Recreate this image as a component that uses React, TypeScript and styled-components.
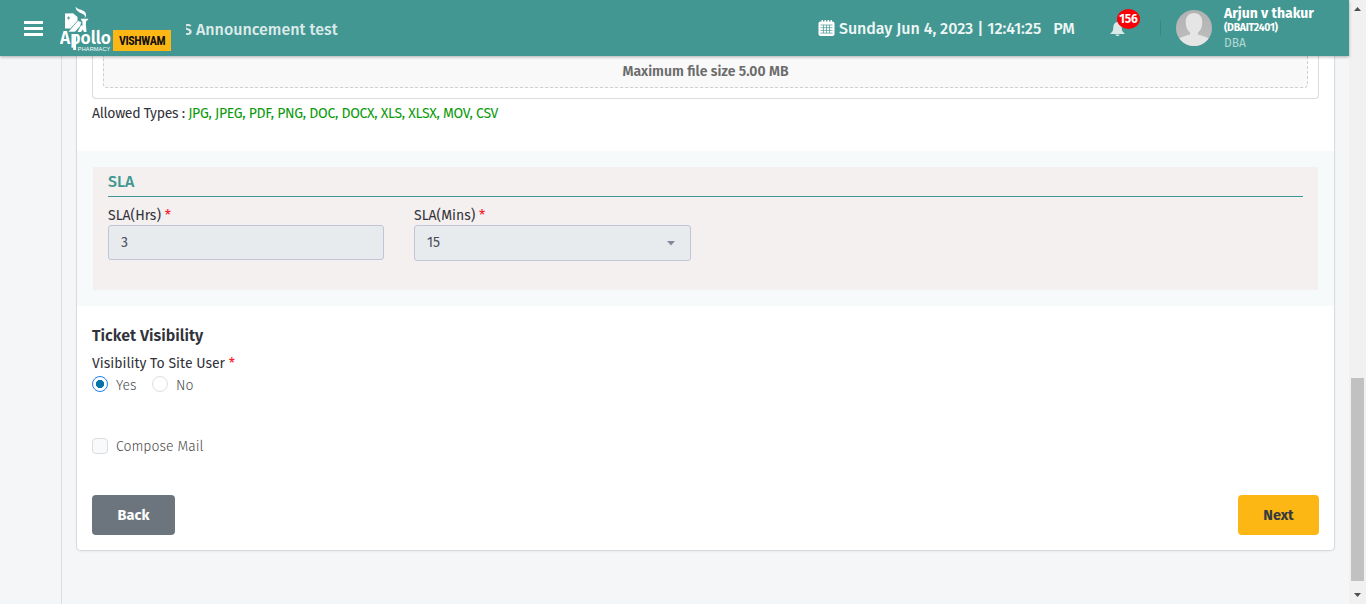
import React from "react";
import styled, { createGlobalStyle } from "styled-components";

const GlobalStyle = createGlobalStyle`
  * { box-sizing: border-box; }
  body {
    margin: 0;
    overflow: hidden;
    background: #f5f6f8;
    font-family: "Fira Sans", "Noto Sans", "Open Sans", sans-serif;
    font-size: 14px;
    color: #32323a;
  }
  button { font: inherit; }
`;

const Page = styled.div`
  display: flex;
  width: 100%;
  height: 604px;
`;

const Viewport = styled.div`
  flex: 1;
  min-width: 0;
  display: flex;
  flex-direction: column;
`;

const Text = styled.span<{ $ls?: number }>`
  letter-spacing: ${(p) => p.$ls ?? 0}px;
  white-space: pre;
`;

/* ---------- Header ---------- */

const Header = styled.header`
  position: relative;
  z-index: 2;
  flex: none;
  height: 56px;
  display: flex;
  align-items: center;
  padding-left: 24px;
  background: #429792;
  color: #fff;
  box-shadow: 0 1px 3px rgba(0, 0, 0, 0.3);
`;

const MenuButton = styled.button`
  width: 19px;
  height: 15px;
  margin: 1px 17px 0 0;
  padding: 0;
  border: 0;
  background: none;
  display: flex;
  flex-direction: column;
  justify-content: space-between;
`;

const MenuBar = styled.span`
  width: 19px;
  height: 3px;
  background: #fff;
`;

const Brand = styled.div`
  display: flex;
  align-items: flex-end;
  height: 56px;
  width: 126px;
`;

const Tag = styled.div`
  width: 58px;
  height: 21px;
  margin: 0 0 5px 0;
  display: flex;
  align-items: center;
  justify-content: center;
  background: #fdb714;
  color: #111;
  font: 700 12px/22px Roboto, sans-serif;
  font-stretch: 75%;
`;

const Announcement = styled.div`
  width: 632px;
  height: 24px;
  display: flex;
  align-items: center;
  overflow: hidden;
  font-size: 16px;
  font-weight: 500;
  color: #dcebea;
`;

const Marquee = styled.div`
  margin-left: -3px;
  padding-top: 2px;
`;

const Clock = styled.div`
  width: 292px;
  display: flex;
  align-items: center;
  font-size: 16px;
  font-weight: 500;
  color: #eef6f5;
  svg { margin-right: 4px; }
`;

const Meridiem = styled.span`
  margin-left: 12px;
`;

const Bell = styled.div`
  position: relative;
  width: 50px;
  height: 56px;
  border: 0;
  svg { position: absolute; left: 0; top: 22px; }
`;

const Badge = styled.span`
  position: absolute;
  left: 7px;
  top: 9px;
  width: 23px;
  height: 20px;
  border-radius: 50%;
  background: #fb0007;
  font-size: 12px;
  font-weight: 700;
  line-height: 20px;
  text-align: center;
`;

const Divider = styled.span`
  width: 1px;
  height: 16px;
  margin-right: 15px;
  background: #3a8782;
`;

const UserInfo = styled.div`
  margin-left: 12px;
  height: 56px;
  padding-top: 5px;
  display: flex;
  flex-direction: column;
`;

const UserLine = styled.span<{ $size: number; $weight: number; $line: number; $color?: string }>`
  font-size: ${(p) => p.$size}px;
  font-weight: ${(p) => p.$weight};
  line-height: ${(p) => p.$line}px;
  color: ${(p) => p.$color ?? "#fff"};
`;

/* ---------- Content ---------- */

const Body = styled.div`
  flex: 1;
  min-height: 0;
  display: flex;
`;

const Sidebar = styled.aside`
  width: 62px;
  border-right: 1px solid #dcdee1;
`;

const Card = styled.main`
  width: 1259px;
  height: 495px;
  margin-left: 14px;
  display: flex;
  flex-direction: column;
  background: #fff;
  border: 1px solid #d9dcdf;
  border-top: 0;
  border-radius: 0 0 5px 5px;
  box-shadow: 0 1px 2px rgba(0, 0, 0, 0.05);
`;

const UploadBox = styled.section`
  flex: none;
  height: 43px;
  margin: 0 15px;
  padding: 0 10px 10px;
  border: 1px solid #dcdcde;
  border-top: 0;
  border-radius: 0 0 4px 4px;
`;

const DropZone = styled.div`
  height: 32px;
  display: flex;
  justify-content: center;
  background: #f9f9f9;
  border: 1px dashed #cfcfcf;
  border-top: 0;
  border-radius: 0 0 4px 4px;
  font-weight: 600;
  line-height: 31px;
  color: #6b6b6b;
`;

const AllowedTypes = styled.div`
  height: 52px;
  padding: 4px 15px 0;
  line-height: 21px;
`;

const Green = styled(Text)`
  color: #0b9a0b;
`;

const SlaBand = styled.section`
  flex: none;
  height: 155px;
  padding: 16px;
  background: #f6fafb;
`;

const SlaPanel = styled.div`
  height: 123px;
  padding: 0 15px;
  background: #f4f0ef;
`;

const SlaTitle = styled.h3`
  height: 30px;
  margin: 0;
  border-bottom: 1px solid #429792;
  font-size: 16px;
  font-weight: 500;
  line-height: 30px;
  color: #429792;
`;

const Fields = styled.div`
  display: flex;
  gap: 30px;
  padding-top: 8px;
`;

const Field = styled.div<{ $width: number }>`
  width: ${(p) => p.$width}px;
`;

const FieldLabel = styled.label`
  display: block;
  height: 20px;
  line-height: 21px;
`;

const Required = styled.span`
  color: #f5222d;
`;

const Control = styled.div<{ $height: number }>`
  height: ${(p) => p.$height}px;
  padding: 0 15px 0 12px;
  display: flex;
  align-items: center;
  justify-content: space-between;
  line-height: 34px;
  background: #e8ebee;
  border: 1px solid #c2c5d6;
  border-radius: 3px;
  color: #4b4d57;
`;

const Visibility = styled.section`
  height: 189px;
  padding: 20px 15px 0;
`;

const Heading = styled.h4`
  margin: 0;
  font-size: 16px;
  font-weight: 600;
  line-height: 20px;
`;

const VisibilityLabel = styled.div`
  margin-top: 8px;
  line-height: 20px;
`;

const Options = styled.div<{ $top: number }>`
  display: flex;
  align-items: center;
  height: 20px;
  margin-top: ${(p) => p.$top}px;
  font-weight: 300;
  color: #4c4c4c;
`;

const Radio = styled.span<{ $checked?: boolean }>`
  width: 16px;
  height: 16px;
  margin-right: 8px;
  border: 1px solid ${(p) => (p.$checked ? "#1a80f0" : "#dcdfe1")};
  border-radius: 50%;
  background: ${(p) => (p.$checked ? "radial-gradient(circle, #0275a8 0 3.8px, #fff 4.4px)" : "#fff")};
`;

const Checkbox = styled.span`
  width: 16px;
  height: 16px;
  margin-right: 8px;
  border: 1px solid #dadcdf;
  border-radius: 4px;
  background: #f9fafb;
`;

const OptionText = styled(Text)<{ $width: number; $drop?: number }>`
  width: ${(p) => p.$width}px;
  padding-top: ${(p) => p.$drop ?? 1}px;
`;

const Actions = styled.footer`
  display: flex;
  justify-content: space-between;
  padding: 0 15px;
`;

const Button = styled.button<{ $bg: string; $fg: string; $width: number }>`
  width: ${(p) => p.$width}px;
  height: 40px;
  padding: 0;
  border: 0;
  border-radius: 4px;
  background: ${(p) => p.$bg};
  color: ${(p) => p.$fg};
  font-size: 14.5px;
  font-weight: 700;
`;

/* ---------- Scrollbar ---------- */

const Scrollbar = styled.div`
  flex: none;
  width: 17px;
  display: flex;
  flex-direction: column;
  align-items: center;
  background: #f1f1f1;
`;

const Arrow = styled.svg`
  width: 17px;
  height: 17px;
`;

const Thumb = styled.div`
  width: 13px;
  height: 203px;
  margin-top: 361px;
  margin-bottom: 6px;
  background: #c1c1c1;
`;

function ApolloLogo() {
  return (
    <svg width="53" height="56" viewBox="60 0 53 56" fill="#fff">
      <path d="M65 13.500 L73 13.3 L77.500 17 L77.500 21 L70.500 28.500 L65 28.500 Z" />
      <path d="M67 18h3.200M68.600 16.400v3.200" stroke="#429792" strokeWidth="0.900" />
      <path d="M68 32 L78 20.500 L81.500 22 L80.500 26 L75 32 Z" stroke="#429792" strokeWidth="0.600" />
      <path d="M77.500 32 L81 25.500 L86 25.500 L86.500 32 L84 32 L82.800 29.500 L81 32 Z" />
      <path d="M81 18.800h7.500l-1.500 1.900h-.8l-.5 5.500h-3l-.5-5.500h-.8z" />
      <path d="M84.500 18.200c1.300-2.200.3-3.400-2.700-4.700s-6-3-6.300-6.700c2 2.500 5 2.500 7.700 4 3.700 2.200 3.700 5.400 1.300 7.400z" />
      <path d="M73.200 34h2.900v16h-2.900z" />
      <text x="60" y="43.500" fontSize="18.500" fontWeight="600" textLength="51" lengthAdjust="spacingAndGlyphs">Apollo</text>
      <text x="77.800" y="50.800" fontSize="5.600" textLength="32.500" fontFamily="Liberation Sans, sans-serif">PHARMACY</text>
    </svg>
  );
}

function CalendarIcon() {
  return (
    <svg width="17" height="16" viewBox="0 0 17 16" fill="#fff">
      <rect x="0.500" y="1.500" width="16" height="14.500" rx="2" />
      <path d="M3.500 0h1.500v3H3.500zM6.500 0H8v3H6.500zM9.500 0H11v3H9.500zM12.500 0H14v3h-1.500z" />
      <path d="M2.500 5h12M2.500 7.700h12M2.500 10.400h12M2.500 13.100h12M5.500 5v8M8.500 5v8M11.500 5v8" fill="none" stroke="#429792" strokeWidth="0.700" />
    </svg>
  );
}

function Avatar() {
  return (
    <svg width="36" height="36" viewBox="0 0 36 36">
      <defs>
        <clipPath id="avatar"><circle cx="18" cy="18" r="18" /></clipPath>
        <linearGradient id="shade" x1="0" y1="0" x2="0" y2="1">
          <stop offset="0" stopColor="#b2b2b2" />
          <stop offset="1" stopColor="#bebebe" />
        </linearGradient>
      </defs>
      <g clipPath="url(#avatar)">
        <rect width="36" height="36" fill="url(#shade)" />
        <path d="M18 3c5.500 0 8.500 4 8.300 9.500-.1 5-1.800 8-4.300 10v2c3 1.200 8.500 2 12 5V36H2v-6.500c3.500-3 9-3.800 12-5v-2c-2.500-2-4.200-5-4.300-10C9.500 7 12.500 3 18 3z" fill="#e5e5e5" />
      </g>
    </svg>
  );
}

export default function App() {
  return (
    <Page>
      <GlobalStyle />
      <Viewport>
        <Header>
          <MenuButton aria-label="Menu"><MenuBar /><MenuBar /><MenuBar /></MenuButton>
          <Brand><ApolloLogo /><Tag><Text $ls={-0.4}>VISHWAM</Text></Tag></Brand>
          <Announcement><Marquee><Text>S Announcement test</Text></Marquee></Announcement>
          <Clock>
            <CalendarIcon />
            <Text $ls={-0.05}>Sunday Jun 4, 2023 | 12:41:25</Text>
            <Meridiem>PM</Meridiem>
          </Clock>
          <Bell>
            <svg width="15" height="15" viewBox="0 0 15 15" fill="#d8e9e8">
              <path d="M7.500 0c-3 .3-4.200 2.500-4.200 5.500 0 3-.8 4.500-2.800 5.800V12h14v-.7c-2-1.300-2.800-2.800-2.800-5.800C11.700 2.500 10.500.3 7.500 0zM5.500 12.500c.3 2 3.700 2 4 0z" />
            </svg>
            <Badge><Text $ls={-0.1}>156</Text></Badge>
          </Bell>
          <Divider />
          <Avatar />
          <UserInfo>
            <UserLine $size={14} $weight={700} $line={17}><Text>Arjun v thakur</Text></UserLine>
            <UserLine $size={10.5} $weight={700} $line={12}><Text $ls={-0.3}>(DBAIT2401)</Text></UserLine>
            <UserLine $size={12} $weight={400} $line={18} $color="#b5d8d5"><Text>DBA</Text></UserLine>
          </UserInfo>
        </Header>
        <Body>
          <Sidebar />
          <Card>
            <UploadBox>
              <DropZone><Text>Maximum file size 5.00 MB</Text></DropZone>
            </UploadBox>
            <AllowedTypes>
              <Text $ls={-0.3}>Allowed Types : </Text>
              <Green $ls={-0.3}>JPG, JPEG, PDF, PNG, DOC, DOCX, XLS, XLSX, MOV, CSV</Green>
            </AllowedTypes>
            <SlaBand>
              <SlaPanel>
                <SlaTitle>SLA</SlaTitle>
                <Fields>
                  <Field $width={276}>
                    <FieldLabel><Text>SLA(Hrs) <Required>*</Required></Text></FieldLabel>
                    <Control $height={35}>3</Control>
                  </Field>
                  <Field $width={277}>
                    <FieldLabel><Text>SLA(Mins) <Required>*</Required></Text></FieldLabel>
                    <Control $height={36}>
                      15
                      <svg width="8" height="5" viewBox="0 0 8 5"><path d="M0 0h8L4 4.500z" fill="#85889a" /></svg>
                    </Control>
                  </Field>
                </Fields>
              </SlaPanel>
            </SlaBand>
            <Visibility>
              <Heading><Text>Ticket Visibility</Text></Heading>
              <VisibilityLabel><Text>Visibility To Site User <Required>*</Required></Text></VisibilityLabel>
              <Options $top={0}>
                <Radio $checked />
                <OptionText $width={36} $drop={2}>Yes</OptionText>
                <Radio />
                <OptionText $width={36} $drop={2}>No</OptionText>
              </Options>
              <Options $top={42}>
                <Checkbox />
                <OptionText $width={120}>Compose Mail</OptionText>
              </Options>
            </Visibility>
            <Actions>
              <Button $bg="#6c757d" $fg="#fff" $width={83}><Text>Back</Text></Button>
              <Button $bg="#fdb714" $fg="#343a40" $width={81}><Text>Next</Text></Button>
            </Actions>
          </Card>
        </Body>
      </Viewport>
      <Scrollbar>
        <Arrow viewBox="0 0 17 17"><path d="M5 11h7L8.500 7z" fill="#505050" /></Arrow>
        <Thumb />
        <Arrow viewBox="0 0 17 17"><path d="M5 6h7L8.500 10z" fill="#505050" /></Arrow>
      </Scrollbar>
    </Page>
  );
}
